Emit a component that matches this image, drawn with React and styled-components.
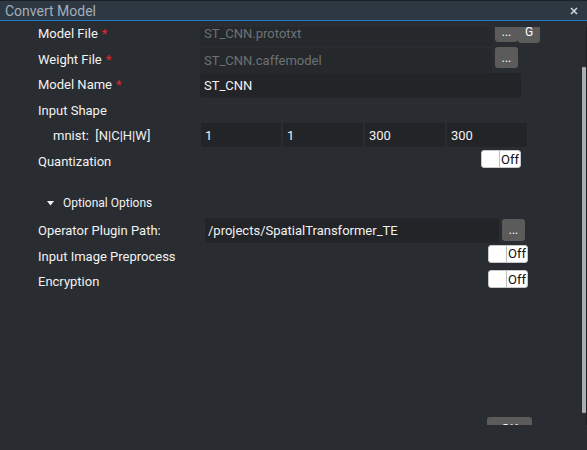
import { useEffect, useRef } from "react";
import styled, { createGlobalStyle } from "styled-components";

const GlobalStyle = createGlobalStyle`
  html, body {
    margin: 0;
    padding: 0;
    background: #292c30;
  }
  body {
    font-family: Roboto, "Noto Sans", sans-serif;
  }
`;

const Window = styled.div`
  width: 587px;
  height: 450px;
  display: flex;
  flex-direction: column;
  background: #292c30;
  overflow: hidden;
`;

const TitleBar = styled.div`
  flex: none;
  height: 19px;
  display: flex;
  align-items: center;
  justify-content: space-between;
  padding: 0 9px 0 5px;
  background: #2d3843;
  border-top: 1px solid #1c2026;
  border-bottom: 1px solid #2277cc;
  color: #a3adb8;
  font-size: 14px;
`;

const Body = styled.div`
  flex: none;
  height: 398px;
  margin-top: 6px;
  display: flex;
`;

const Viewport = styled.div`
  flex: 1;
  overflow: hidden;
`;

const Content = styled.div`
  padding-left: 38px;
  padding-bottom: 40px;
  color: #f2f2f2;
  font-size: 13px;
`;

const ScrollTrack = styled.div`
  flex: none;
  width: 6px;
  border-right: 1px solid #1e2124;
`;

const Thumb = styled.div`
  margin: 40px 0 0 2px;
  width: 4px;
  height: 346px;
  background: #a9adb5;
  border-radius: 1px;
`;

const Row = styled.div`
  height: 25.5px;
  display: flex;
  align-items: center;
`;

const Label = styled.div`
  flex: none;
  width: ${(p) => p.$width || 162}px;
  padding-left: ${(p) => p.$indent || 0}px;
  box-sizing: border-box;
  white-space: pre;
`;

const Star = styled.span`
  color: #e8262a;
  margin-left: 4px;
`;

const Field = styled.div`
  align-self: flex-start;
  margin-top: ${(p) => p.$top || 0}px;
  width: ${(p) => p.$width}px;
  height: ${(p) => p.$height || 25}px;
  box-sizing: border-box;
  display: flex;
  align-items: center;
  padding-left: ${(p) => p.$pad || 4}px;
  background: ${(p) => (p.$muted ? "#26292c" : "#222427")};
  color: ${(p) => (p.$muted ? "#6d7177" : "#f2f2f2")};
  border-radius: 2px;
  white-space: nowrap;
  overflow: hidden;
`;

const ShapeFields = styled.div`
  display: flex;
  gap: 2px;
  margin-left: 1px;
  align-self: flex-start;
`;

const SmallButton = styled.div`
  flex: none;
  align-self: flex-start;
  margin-left: ${(p) => p.$gap ?? 3}px;
  margin-top: ${(p) => p.$top || 0}px;
  width: ${(p) => p.$width || 23}px;
  height: ${(p) => p.$height || 21}px;
  display: flex;
  align-items: center;
  justify-content: center;
  background: #5b5b5b;
  border-radius: 3px;
  color: #ffffff;
  font-size: 12px;
`;

const ToggleSlot = styled.div`
  width: ${(p) => p.$width}px;
  display: flex;
  justify-content: flex-end;
  align-self: flex-start;
  margin-top: ${(p) => p.$top || 1}px;
`;

const Toggle = styled.div`
  width: 40px;
  height: 18px;
  box-sizing: border-box;
  display: flex;
  background: #ffffff;
  border: 1px solid #c9c9c9;
  border-radius: 3px;
  color: #111111;
  font-size: 13px;
`;

const Knob = styled.div`
  width: 17px;
  border-right: 1px solid #bdbdbd;
`;

const ToggleText = styled.div`
  flex: 1;
  display: flex;
  align-items: center;
  justify-content: center;
`;

const SectionHeader = styled.div`
  height: 22px;
  margin: 18px 0 4px;
  padding-left: 9px;
  display: flex;
  align-items: center;
  gap: 9px;
  font-size: 12px;
`;

const Footer = styled.div`
  width: 494px;
  margin-top: 122px;
  display: flex;
  justify-content: flex-end;
`;

const OkButton = styled.div`
  width: 45px;
  height: 24px;
  display: flex;
  align-items: center;
  justify-content: center;
  background: #5b5b5b;
  border-radius: 3px;
  color: #ffffff;
  font-size: 13px;
`;

const SwitchOff = ({ width, top }) => (
  <ToggleSlot $width={width} $top={top}>
    <Toggle>
      <Knob />
      <ToggleText>Off</ToggleText>
    </Toggle>
  </ToggleSlot>
);

export default function App() {
  const viewRef = useRef(null);

  useEffect(() => {
    if (viewRef.current) viewRef.current.scrollTop = 6;
  }, []);

  return (
    <Window>
      <GlobalStyle />
      <TitleBar>
        <span>Convert Model</span>
        <svg width="8" height="8" viewBox="0 0 8 8">
          <path d="M1 1L7 7M7 1L1 7" stroke="#d0d4d8" strokeWidth="1.6" />
        </svg>
      </TitleBar>
      <Body>
        <Viewport ref={viewRef}>
          <Content>
            <Row>
              <Label>
                Model File<Star>*</Star>
              </Label>
              <Field $muted $width={292}>
                ST_CNN.prototxt
              </Field>
              <SmallButton>...</SmallButton>
              <SmallButton $gap={0} $width={22} $height={22}>
                G
              </SmallButton>
            </Row>
            <Row>
              <Label>
                Weight File<Star>*</Star>
              </Label>
              <Field $muted $width={292} $top={1}>
                ST_CNN.caffemodel
              </Field>
              <SmallButton $top={0.5}>...</SmallButton>
            </Row>
            <Row>
              <Label>
                Model Name<Star>*</Star>
              </Label>
              <Field $width={321} $top={1}>
                ST_CNN
              </Field>
            </Row>
            <Row>
              <Label>Input Shape</Label>
            </Row>
            <Row>
              <Label $indent={15}>{"mnist:  [N|C|H|W]"}</Label>
              <ShapeFields>
                {["1", "1", "300", "300"].map((v, i) => (
                  <Field key={i} $width={80} $height={24}>
                    {v}
                  </Field>
                ))}
              </ShapeFields>
            </Row>
            <Row>
              <Label>Quantization</Label>
              <SwitchOff width={321} top={1.5} />
            </Row>

            <SectionHeader>
              <svg width="7" height="5" viewBox="0 0 7 5">
                <path d="M0 0H7L3.5 4.5Z" fill="#f2f2f2" />
              </svg>
              <span>Optional Options</span>
            </SectionHeader>
            <Row>
              <Label $width={167}>Operator Plugin Path:</Label>
              <Field $width={294} $pad={3}>
                /projects/SpatialTransformer_TE
              </Field>
              <SmallButton $height={22} $top={1.25}>
                ...
              </SmallButton>
            </Row>
            <Row>
              <Label $width={167}>Input Image Preprocess</Label>
              <SwitchOff width={323} top={0} />
            </Row>
            <Row>
              <Label $width={167}>Encryption</Label>
              <SwitchOff width={323} top={1.25} />
            </Row>

            <Footer>
              <OkButton>OK</OkButton>
            </Footer>
          </Content>
        </Viewport>
        <ScrollTrack>
          <Thumb />
        </ScrollTrack>
      </Body>
    </Window>
  );
}
